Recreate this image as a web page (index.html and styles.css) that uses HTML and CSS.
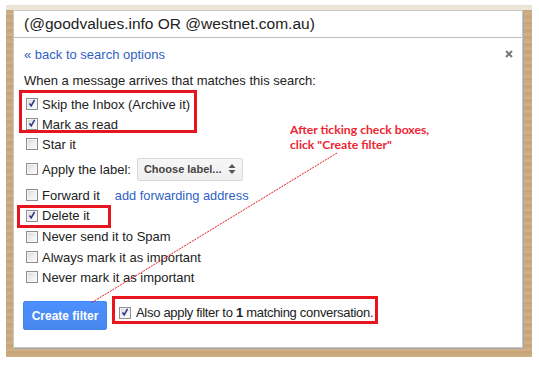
FILE: index.html
```html
<!DOCTYPE html>
<html lang="en">
<head>
<meta charset="utf-8">
<title>Create filter</title>
<link rel="stylesheet" href="styles.css">
</head>
<body>
<div class="frame">
  <div class="dialog">
    <div class="dlg-head">(@goodvalues.info OR @westnet.com.au)</div>
    <div class="dlg-body">
      <div class="toprow">
        <a class="link" href="#">« back to search options</a>
        <span class="close"><svg width="8" height="8" viewBox="0 0 8 8"><path d="M1 1L7 7M7 1L1 7" stroke="#7a7a7a" stroke-width="2"/></svg></span>
      </div>
      <p class="intro">When a message arrives that matches this search:</p>
      <div class="opts">
        <div class="opt"><span class="cb on"></span>Skip the Inbox (Archive it)</div>
        <div class="opt"><span class="cb on"></span>Mark as read</div>
        <div class="opt"><span class="cb"></span>Star it</div>
        <div class="opt opt-apply"><span class="cb"></span>Apply the label:<span class="select">Choose label...<svg class="arrows" width="8" height="12" viewBox="0 0 8 12"><path d="M0.5 5L4 1L7.5 5Z M0.5 7L4 11L7.5 7Z" fill="#555"/></svg></span></div>
        <div class="opt opt-fwd"><span class="cb"></span>Forward it<a class="link fwd-link" href="#">add forwarding address</a></div>
        <div class="opt h21"><span class="cb on"></span>Delete it</div>
        <div class="opt h21"><span class="cb"></span>Never send it to Spam</div>
        <div class="opt"><span class="cb"></span>Always mark it as important</div>
        <div class="opt"><span class="cb"></span>Never mark it as important</div>
      </div>
      <div class="actions">
        <button class="btn" type="button">Create filter</button>
        <div class="also"><span class="cb on"></span>Also apply filter to&nbsp;<b>1</b>&nbsp;matching conversation.</div>
      </div>
    </div>

    <div class="mark mark-1"></div>
    <div class="mark mark-2"></div>
    <div class="mark mark-3"></div>
    <div class="note">After ticking check boxes,<br>click "Create filter"</div>
    <svg class="pointer" width="510" height="338" viewBox="0 0 510 338"><line x1="323" y1="142" x2="77" y2="292" stroke="#e8141e" stroke-width="1" stroke-dasharray="2 1"/></svg>
  </div>
</div>
</body>
</html>
```

FILE: styles.css
```css
html, body {
  margin: 0;
  padding: 0;
  background: #fff;
}
body {
  font-family: "Liberation Sans", Arial, sans-serif;
  font-size: 13px;
  color: #222;
}
.frame {
  margin: 5px 0 0 6px;
  width: 526px;
  height: 352px;
  box-sizing: border-box;
  padding: 5px 8px 8px 7px;
  background:
    linear-gradient(to bottom, #ebe2d6 0, #efe6da 5px, transparent 5px),
    repeating-linear-gradient(to bottom, #c9a87b 0, #d2b389 2px, #c5a274 4px, #cbab80 7px),
    #c9a87c;
}
.dialog {
  position: relative;
  width: 510px;
  height: 338px;
  box-sizing: border-box;
  background: #fff;
  border: 1px solid #c6c6c6;
  box-shadow: 1px 1px 0 #a9a9a9;
}
.dlg-head {
  height: 26px;
  border-bottom: 1px solid #bdbdbd;
  padding-left: 10px;
  font-size: 15.5px;
  line-height: 26px;
  color: #222;
  white-space: nowrap;
}
.dlg-body {
  padding: 9px 9px 0 10px;
}
.toprow {
  display: flex;
  justify-content: space-between;
  align-items: flex-start;
  height: 16px;
  line-height: 16px;
}
.close {
  display: block;
  width: 8px;
  height: 8px;
  margin-top: 3px;
}
.close svg { display: block; }
.link {
  color: #2f5fc4;
  text-decoration: none;
}
.intro {
  margin: 10px 0 0 0;
  line-height: 16px;
}
.opts {
  margin-top: 5px;
  padding-left: 2px;
  display: flex;
  flex-direction: column;
}
.opt {
  height: 20px;
  display: flex;
  align-items: center;
  white-space: nowrap;
}
.h21 { height: 21px; }
.opt-apply {
  margin-top: 3px;
  height: 24px;
}
.opt-fwd {
  margin-top: 4px;
}
.fwd-link {
  margin-left: 15px;
  font-size: 12.8px;
}
.cb {
  display: inline-block;
  position: relative;
  width: 12px;
  height: 12px;
  box-sizing: border-box;
  border: 1px solid #8f8f8f;
  background: linear-gradient(135deg, #d6d6d6 0%, #f2f2f2 60%, #fbfbfb 100%);
  box-shadow: inset 0 0 0 1px #f4f4f4;
  margin-right: 4px;
  flex: none;
}
.cb.on::after {
  content: "";
  position: absolute;
  left: 2px;
  top: 0px;
  width: 6px;
  height: 8px;
  background: no-repeat center/6px 8px url("data:image/svg+xml,%3Csvg xmlns='http://www.w3.org/2000/svg' width='6' height='8' viewBox='0 0 6 8'%3E%3Cpath d='M0.5 4.5L2.2 6.8L5.6 0.8' fill='none' stroke='%23303a8c' stroke-width='1.6'/%3E%3C/svg%3E");
}
.select {
  margin-left: 6px;
  display: inline-flex;
  align-items: center;
  width: 106px;
  height: 23px;
  box-sizing: border-box;
  padding-left: 6px;
  border: 1px solid #d9d9d9;
  border-radius: 2px;
  background: linear-gradient(#f6f6f6, #efefef);
  font-size: 11px;
  font-weight: bold;
  color: #444;
}
.arrows {
  margin-left: 6px;
}
.actions {
  margin-top: 14px;
  display: flex;
  align-items: flex-start;
}
.btn {
  margin: 0 0 0 -1px;
  width: 84px;
  height: 29px;
  padding: 0;
  border: 1px solid #3f86f0;
  border-radius: 2px;
  background: linear-gradient(#4d90fe, #4787ed);
  color: #fff;
  font-family: "Liberation Sans", Arial, sans-serif;
  font-size: 12px;
  font-weight: bold;
}
.also {
  margin: 4px 0 0 12px;
  display: flex;
  align-items: center;
  height: 16px;
  line-height: 16px;
  font-size: 13px;
  letter-spacing: -0.3px;
  white-space: nowrap;
}
.also .cb { margin-right: 5px; }
.mark {
  position: absolute;
  box-sizing: border-box;
  border: 3px solid #e8141e;
}
.mark-1 { left: 5px; top: 79px; width: 178px; height: 43px; }
.mark-2 { left: 3px; top: 194px; width: 94px; height: 23px; }
.mark-3 { left: 98px; top: 285px; width: 266px; height: 28px; }
.note {
  position: absolute;
  left: 276px;
  top: 111px;
  font-family: Lato, "Liberation Sans", sans-serif;
  font-weight: bold;
  font-size: 12.2px;
  line-height: 15px;
  color: #ee2431;
  white-space: nowrap;
}
.pointer {
  position: absolute;
  left: 0;
  top: 0;
  pointer-events: none;
}
```
